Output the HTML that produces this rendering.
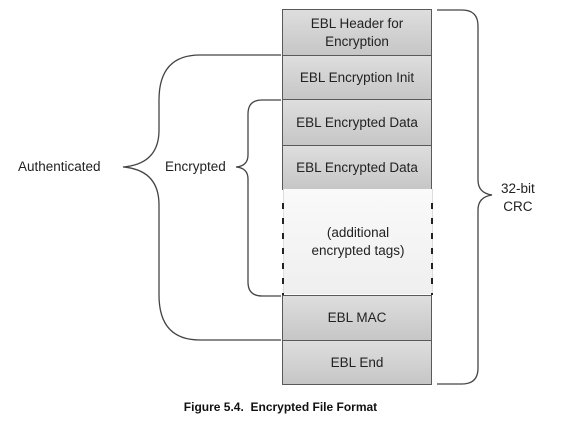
<!DOCTYPE html>
<html><head><style>
body{margin:0;width:561px;height:429px;background:#fff;position:relative;overflow:hidden;font-family:"Liberation Sans",sans-serif;}
.b{position:absolute;left:282px;width:148px;border:1px solid #595959;background:linear-gradient(#dedede,#c6c6c6);display:flex;align-items:center;justify-content:center;text-align:center;font-size:13.5px;color:#222;line-height:18px;}
.t{position:absolute;font-size:13.5px;color:#222;}
</style></head><body>
<div class="b" style="top:9px;height:45px">EBL Header for<br>Encryption</div>
<div class="b" style="top:55px;height:43px">EBL Encryption Init</div>
<div class="b" style="top:99px;height:45px">EBL Encrypted Data</div>
<div class="b" style="top:145px;height:43px">EBL Encrypted Data</div>
<div class="b" style="top:189px;height:105px;border:none;border-left:1px solid #ddd;border-right:1px solid #ddd;left:283px;width:148px;background:linear-gradient(#fafafa,#efefef)">(additional<br>encrypted tags)</div>
<div class="b" style="top:295px;height:44px">EBL MAC</div>
<div class="b" style="top:340px;height:43px">EBL End</div>
<svg width="561" height="429" style="position:absolute;left:0;top:0;z-index:2" fill="none" stroke="#444" stroke-width="1.3">
<path d="M281 55 H200 Q159 55 159 100 V130 Q159 164 123 167 Q159 170 159 205 V295 Q159 340 200 340 H281"/>
<path d="M281 100 H262 Q248 100 248 114 V155 Q248 166 236 167 Q248 168 248 179 V282 Q248 296 262 296 H281"/>
<path d="M437 10 H462 Q478 10 478 26 V180 Q478 193 492 195 Q478 197 478 210 V368 Q478 384 462 384 H437"/>
<path d="M283 203 V295 M432 203 V295" stroke="#222" stroke-width="2" stroke-dasharray="6 9"/>
</svg>
<div class="t" style="left:18px;top:159px">Authenticated</div>
<div class="t" style="left:165px;top:159px">Encrypted</div>
<div class="t" style="left:501px;top:180px;text-align:center;line-height:18px">32-bit<br>CRC</div>
<div style="position:absolute;left:0;width:561px;top:400px;text-align:center;font-weight:bold;font-size:12px;color:#111">Figure 5.4.&nbsp; Encrypted File Format</div>
</body></html>
